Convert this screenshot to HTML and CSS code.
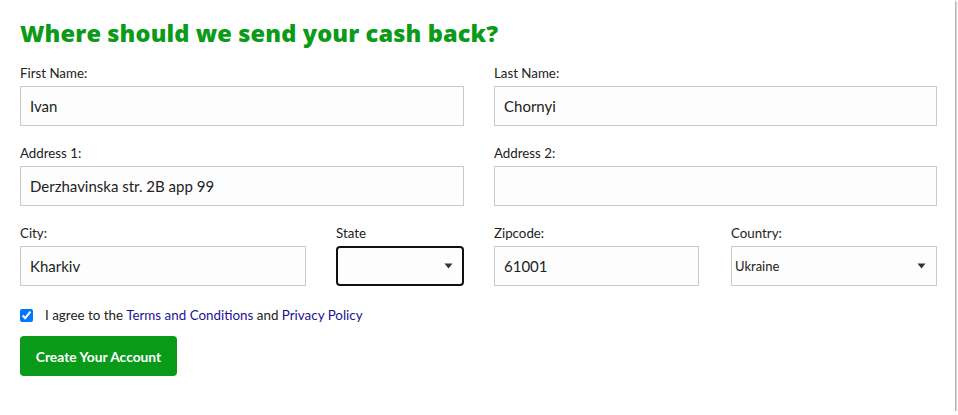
FILE: index.html
```html
<!DOCTYPE html>
<html lang="en">
<head>
<meta charset="utf-8">
<title>Cash back</title>
<link rel="stylesheet" href="styles.css">
</head>
<body>
<div class="card">
  <h1 class="title">Where should we send your cash back?</h1>
  <form class="form">
    <div class="row two">
      <div class="field">
        <label class="label">First Name:</label>
        <input class="input" type="text" value="Ivan">
      </div>
      <div class="field">
        <label class="label">Last Name:</label>
        <input class="input" type="text" value="Chornyi">
      </div>
    </div>
    <div class="row two">
      <div class="field">
        <label class="label">Address 1:</label>
        <input class="input" type="text" value="Derzhavinska str. 2B app 99">
      </div>
      <div class="field">
        <label class="label">Address 2:</label>
        <input class="input" type="text" value="">
      </div>
    </div>
    <div class="row two">
      <div class="half left">
        <div class="field">
          <label class="label">City:</label>
          <input class="input" type="text" value="Kharkiv">
        </div>
        <div class="field">
          <label class="label">State</label>
          <div class="select-wrap">
            <select class="select state"><option></option></select>
            <svg class="arrow" width="9" height="6" viewBox="0 0 9 6" aria-hidden="true"><path d="M0.5 0.5 H8.5 L4.5 5.5 Z" fill="#333"/></svg>
          </div>
        </div>
      </div>
      <div class="half right">
        <div class="field">
          <label class="label">Zipcode:</label>
          <input class="input" type="text" value="61001">
        </div>
        <div class="field">
          <label class="label">Country:</label>
          <div class="select-wrap">
            <select class="select country"><option>Ukraine</option></select>
            <svg class="arrow" width="9" height="6" viewBox="0 0 9 6" aria-hidden="true"><path d="M0.5 0.5 H8.5 L4.5 5.5 Z" fill="#333"/></svg>
          </div>
        </div>
      </div>
    </div>
    <div class="agree">
      <input class="check" type="checkbox" checked>
      <span class="agree-text">I agree to the <a class="link" href="#">Terms and Conditions</a> and <a class="link" href="#">Privacy Policy</a></span>
    </div>
    <button class="btn" type="button">Create Your Account</button>
  </form>
</div>
</body>
</html>
```

FILE: styles.css
```css
html, body {
  margin: 0;
  padding: 0;
  background: #fff;
}
body {
  font-family: Lato, "Open Sans", sans-serif;
  color: #222;
}
.card {
  width: 955px;
  height: 411px;
  box-sizing: border-box;
  background: #fff;
  box-shadow: 1px 1px 2px rgba(0, 0, 0, 0.45);
  padding: 17px 18px 0 20px;
}
.title {
  margin: 0 0 15px;
  font-family: "Open Sans", sans-serif;
  font-weight: 800;
  font-size: 23.6px;
  line-height: 32px;
  color: #0b9b17;
  letter-spacing: 0.1px;
}
.form {
  margin: 0;
}
.row {
  margin-bottom: 18px;
}
.two {
  display: grid;
  grid-template-columns: 444px 443px;
  column-gap: 30px;
}
.half {
  display: grid;
}
.left {
  grid-template-columns: 286px 128px;
  column-gap: 30px;
}
.right {
  grid-template-columns: 205px 206px;
  column-gap: 32px;
}
.field {
  display: flex;
  flex-direction: column;
}
.label {
  font-size: 13.3px;
  line-height: 18px;
  margin-bottom: 4px;
  color: #222;
}
.input {
  box-sizing: border-box;
  height: 40px;
  width: 100%;
  margin: 0;
  border: 1px solid #cacaca;
  background: #fdfdfd;
  padding: 0 9px;
  font-family: Lato, sans-serif;
  font-size: 15px;
  color: #222;
  outline: none;
}
.select-wrap {
  position: relative;
  height: 40px;
}
.select {
  -webkit-appearance: none;
  appearance: none;
  box-sizing: border-box;
  height: 40px;
  width: 100%;
  margin: 0;
  font-family: Lato, sans-serif;
  font-size: 13px;
  color: #222;
  background: #fdfdfd;
  outline: none;
}
.state {
  border: 2px solid #111;
  border-radius: 4px;
}
.country {
  border: 1px solid #cacaca;
  border-radius: 0;
  padding-left: 3px;
}
.arrow {
  position: absolute;
  right: 11px;
  top: 17px;
  pointer-events: none;
}
.agree {
  display: flex;
  align-items: center;
  height: 18px;
  margin-top: 20px;
  font-size: 13.4px;
}
.check {
  margin: 0 12px 0 0;
  width: 13px;
  height: 13px;
}
.agree-text {
  line-height: 18px;
  color: #222;
}
.link {
  color: #1b1393;
  text-decoration: none;
}
.btn {
  margin-top: 12px;
  height: 40px;
  width: 157px;
  border: none;
  border-radius: 4px;
  background: #0a9a1a;
  color: #fff;
  font-family: Lato, sans-serif;
  font-weight: 700;
  font-size: 13.8px;
  padding: 0;
  cursor: pointer;
}
```
